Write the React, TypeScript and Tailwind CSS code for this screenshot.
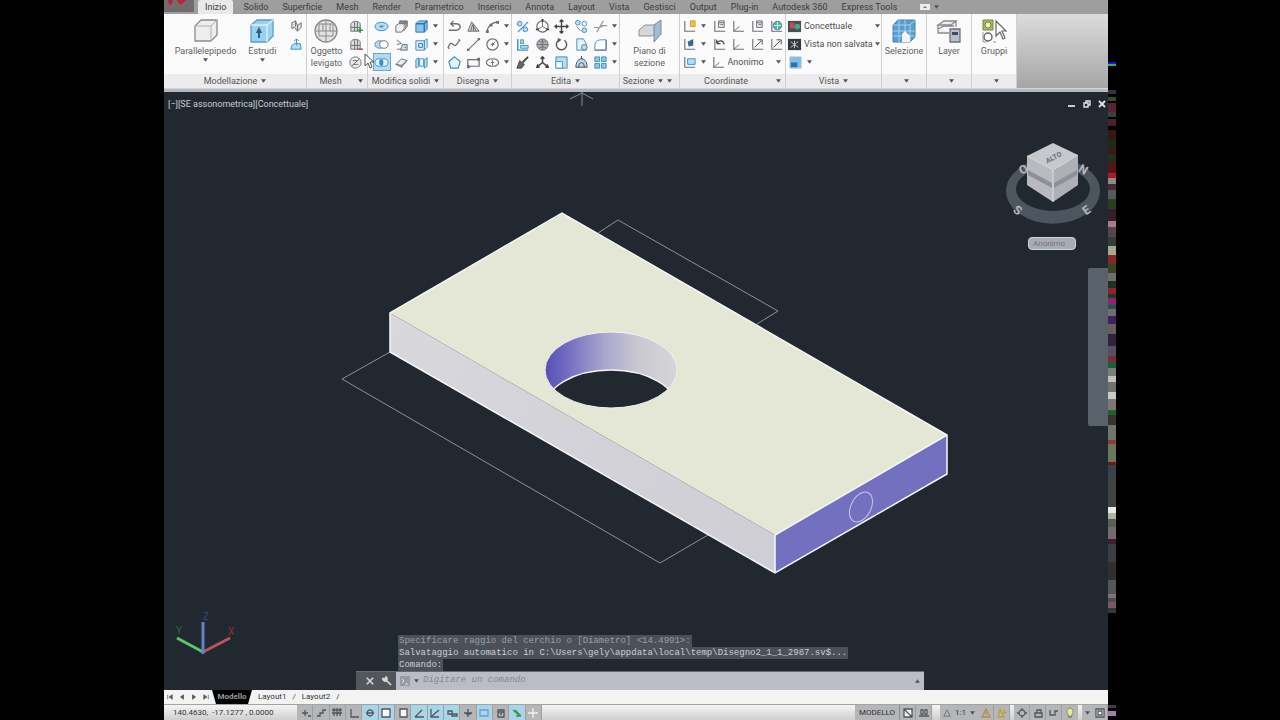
import React from 'react';
import clsx from 'clsx';

const menuTabs = [
    "Inizio", "Solido", "Superficie", "Mesh", "Render", "Parametrico", "Inserisci", "Annota",
    "Layout", "Vista", "Gestisci", "Output", "Plug-in", "Autodesk 360", "Express Tools",
];

const D = '#6b6f75';
const B = '#3f8fc6';
const L = '#b9dcf2';

// Small 16x16 drawings used in the ribbon
const glyphs: Record<string, React.ReactNode> = {
    polysolid: <><path d="M3 4l4-2 2 5 4-3v5l-4 4-3-4-3 1z" fill="#dcdcdc" stroke={D} /><path d="M7 2v6M9 7v6" stroke={D} /></>,
    presspull: <><path d="M3 9l3-2h6l1 6H2z" fill={L} stroke={B} /><path d="M8 9V2M5.5 4.500L8 2l2.500 2.500" stroke={B} /></>,
    meshMore: <><path d="M3 6c0-4 8-5 10-1v8H3zM3 9h10M7 3v10M10 3v10" fill="#dedede" stroke={D} /><path d="M13 9v6M10 12h6" stroke="#2e9a4a" strokeWidth="1.500" /></>,
    meshLess: <><path d="M3 6c0-4 8-5 10-1v8H3zM3 9h10M7 3v10M10 3v10" fill="#dedede" stroke={D} /><path d="M11 13h5" stroke="#b04040" strokeWidth="1.500" /></>,
    noMesh: <><circle cx="8" cy="8" r="6" fill="#ececec" stroke={D} /><path d="M4 12l8-8M5 6h6M5 10h6" stroke={D} /></>,
    union: <><ellipse cx="8" cy="8" rx="7" ry="4.500" fill={L} stroke={B} /><path d="M6 8h4" stroke={B} strokeWidth="2" /></>,
    subtract: <><ellipse cx="6" cy="8" rx="5" ry="4" fill={L} stroke={B} /><ellipse cx="10.500" cy="8" rx="4.500" ry="4" fill="#fff" stroke={D} /></>,
    intersect: <><ellipse cx="5.500" cy="8" rx="4.500" ry="4" fill="#e3f2fb" stroke={B} /><ellipse cx="10.500" cy="8" rx="4.500" ry="4" fill="#e3f2fb" stroke={B} /><ellipse cx="8" cy="8" rx="2" ry="3.500" fill={B} /></>,
    slice: <><path d="M6 2h8v5h-3V6H6z" fill="#888" stroke={D} /><path d="M2 7l3-2h6v5l-3 4H2z" fill="#f2f2f2" stroke={D} /><path d="M11 6l3-3v5l-4 5" fill="#aaa" stroke={D} /></>,
    interfere: <><path d="M3 3l5 4-5 1M3 13h6V8" stroke={D} /><path d="M9 8h5v6H7z" fill="#d9d9d9" stroke={D} /><path d="M11 11h2" stroke={B} /></>,
    thicken: <><path d="M2 10l6-6 6 2-6 7z" fill="#eee" stroke={D} /><path d="M2 10l6 1 6-5M8 11v2" stroke={D} /></>,
    cube: <><path d="M2 5l3-3h9v9l-3 3H2z" fill="#8ec5ea" stroke="#2676b5" /><path d="M2 5h9v9M11 5l3-3" stroke="#2676b5" strokeWidth="1.600" /></>,
    shell: <><path d="M2 4h9l3-2v9l-3 3H2z" fill="#d8ebf7" stroke={B} /><path d="M5 7h4v4H5zM11 4v10" stroke="#2676b5" /></>,
    separate: <><path d="M2 5l3-2v9l-3 2zM11 5l3-2v9l-3 2z" fill={L} stroke={B} /><path d="M6 4h4v8H6z" stroke={B} /></>,
    polyline: <path d="M2 12h8a4 3.500 0 0 0 0-7H4M7 2L4 5l3 3" stroke={D} strokeWidth="1.500" />,
    hatch: <><path d="M2 13L6 3l8 10z" fill="#cfcfcf" stroke={D} /><path d="M5 13l2-7M8 13l0-7M11 13L7 6" stroke={D} /></>,
    arc: <><path d="M2 14C3 7 7 4 13 3" stroke={D} strokeWidth="1.400" /><path d="M1 12h3v3H1zM12 2h3v3h-3zM5 5h3v3H5z" fill={D} /></>,
    spline: <path d="M1 12c3-9 5-4 7-3s3-3 6-6M1 12h2M12 3h2" stroke={D} strokeWidth="1.300" />,
    line: <><path d="M2 14L14 2" stroke={D} strokeWidth="1.200" /><path d="M1 12.500h2.500V15H1zM12.500 1H15v2.500h-2.500z" fill={D} /></>,
    circle: <><circle cx="8" cy="8" r="6" stroke={D} strokeWidth="1.300" /><path d="M8 8l3-3M6 8h4M8 6v4" stroke={D} /></>,
    polygon: <path d="M8 2l6 5-2 7H4L2 7z" fill="#e6f3fb" stroke={B} strokeWidth="1.300" />,
    rect: <><path d="M2 5h12v7H2z" stroke={D} strokeWidth="1.300" /><path d="M1 11h3v3H1zM12 3h3v3h-3z" fill={D} /></>,
    ellipse: <><ellipse cx="8" cy="8" rx="6.500" ry="4" stroke={D} strokeWidth="1.300" /><path d="M6 8h4M8 5v6" stroke={D} /></>,
    erase: <><path d="M3 14L14 3M2 6l4-3M9 13l5-2" stroke={B} strokeWidth="1.300" /><circle cx="5" cy="5" r="2.500" fill={L} stroke={B} /><circle cx="11" cy="11" r="2.500" fill={L} stroke={B} /></>,
    gizmo: <><circle cx="8" cy="8" r="6" stroke={D} strokeWidth="1.300" /><path d="M8 2v6l5 3M8 8l-5 3" stroke={D} /><path d="M7 0h2v3H7zM1 10h3v2H1zM12 10h3v2h-3z" fill="#444" /></>,
    move: <path d="M8 1v14M1 8h14M6 3l2-2 2 2M6 13l2 2 2-2M3 6L1 8l2 2M13 6l2 2-2 2" stroke="#444" strokeWidth="1.500" />,
    align: <><path d="M3 2v12h11" stroke={B} strokeWidth="1.500" /><path d="M6 3h3v4H6zM6 9h8v3H6z" fill={L} stroke={B} /></>,
    sphere: <><circle cx="8" cy="8" r="6" fill="#b5aeb0" stroke={D} /><path d="M2 8h12M8 2v12M4 4c3 2 5 2 8 0M4 12c3-2 5-2 8 0" stroke={D} /></>,
    rotate: <><path d="M5 3.500a5.500 5.500 0 1 0 6 0" stroke="#555" strokeWidth="1.500" /><path d="M4 1l4 2-4 3z" fill="#555" /></>,
    brush: <><path d="M14 2L8 8" stroke="#444" strokeWidth="2" /><path d="M5 6l5 4-3 4H2z" fill="#666" stroke="#444" /></>,
    tripod: <path d="M8 2v6l6 5M8 8l-6 5M6 4l2-2 2 2M5 13l-3 0 1-3M11 13l3 0-1-3" stroke="#444" strokeWidth="1.600" />,
    scale: <><path d="M2 2h12v12H2z" fill={L} stroke={B} /><path d="M2 7h7v7H2z" fill="#fff" stroke={B} /></>,
    copy: <><circle cx="4" cy="4" r="2.500" fill={L} stroke={B} /><circle cx="11" cy="5" r="2.500" stroke={B} /><circle cx="11" cy="12" r="2.500" fill={L} stroke={B} /><path d="M3 8l4 5" stroke={D} /></>,
    trim: <path d="M1 9h5M9 7h6M4 14l7-12M8 9l3-2" stroke="#96999e" strokeWidth="1.200" />,
    stretch: <><path d="M3 2h7l3 5v7H3z" fill="#e6f3fb" stroke={B} /><circle cx="11" cy="11" r="3" fill={L} stroke={D} /></>,
    fillet: <><path d="M2 14V9c0-4 3-6 7-6h5v11z" fill="#fff" stroke={B} /><path d="M2 14h12V3" stroke={D} /></>,
    offset: <><path d="M2 13c0-4 2-9 6-9s6 5 6 9z" fill={L} stroke="#444" /><path d="M5 13c0-2 1-5 3-5s3 3 3 5M8 1v3" stroke="#444" /></>,
    array: <path d="M2 2h5v5H2zM9 2h5v5H9zM2 9h5v5H2zM9 9h5v5H9z" fill="#8ec5ea" stroke={B} />,
    ucs: <><path d="M3 2v11h11" stroke={D} strokeWidth="1.200" /><path d="M3 13l6-5" stroke={D} /></>,
    ucsStar: <><path d="M3 2v11h11" stroke={D} strokeWidth="1.200" /><path d="M9 2h5v6H9z" fill="#f1c04c" stroke="#d79b28" /></>,
    ucsPage: <><path d="M3 2v11h11" stroke={D} strokeWidth="1.200" /><path d="M7 2h6v7H7zM7 4h6M9 6h3" fill="#e9e9e9" stroke={D} /></>,
    ucsWorld: <><path d="M3 2v11h11" stroke={D} strokeWidth="1.200" /><circle cx="9" cy="7" r="4.500" fill="#5fb39b" stroke="#3f7f9d" /><path d="M5 7h8M9 3v8" stroke="#d9f0e8" /></>,
    ucsFace: <><path d="M3 2v11h11" stroke={D} strokeWidth="1.200" /><path d="M6 5l6-3v7l-5 1z" fill="#3a6694" /></>,
    ucsPrev: <><path d="M3 2v11h11" stroke={D} strokeWidth="1.200" /><path d="M5 7c2-4 7-4 8 1M5 7V3M5 7h4" stroke="#444" strokeWidth="1.300" /></>,
    ucsArrow: <><path d="M3 2v11h11" stroke={D} strokeWidth="1.200" /><path d="M5 11l7-7M8 3h5v5" stroke="#444" /></>,
    ucsView: <><path d="M3 2v11h11" stroke={D} strokeWidth="1.200" /><path d="M6 4h8v6H6z" fill={L} stroke={B} /></>,
    style: <><path d="M1 2h14v12H1z" fill="#494f58" /><path d="M3 4h5v6H3z" fill="#c44e57" /><circle cx="11" cy="8" r="3" fill="#4aa486" /></>,
    view: <><path d="M1 2h14v12H1z" fill="#34383d" /><path d="M4 5l8 6M12 5l-8 6M8 4v8" stroke="#cfd3d8" /></>,
    viewport: <><path d="M2 2h12v12H2z" fill="#83bce6" stroke="#b0c4d4" /><path d="M3 8h7v5H3z" fill="#2b72b4" /></>,
};

const Glyph = ({ name }: { name: string }) => (
    <svg viewBox="0 0 16 16" fill="none" className="size-[15px] shrink-0" aria-hidden="true">
        {glyphs[name]}
    </svg>
);

const Caret = () => (
    <svg viewBox="0 0 6 4" className="h-1 w-[5px] shrink-0" aria-hidden="true">
        <path d="M0 0h6L3 4z" fill="#555" />
    </svg>
);

const Tool = ({ name, arrow, active }: { name: string; arrow?: boolean; active?: boolean }) => (
    <button
        type="button"
        aria-label={name}
        className={clsx(
            "flex h-[18px] items-center gap-1 border",
            active ? "border-[#6aa9d6] bg-[#b5dbf3]" : "border-transparent",
        )}
    >
        <Glyph name={name} />
        {arrow && <Caret />}
    </button>
);

const BigTool = ({ label, arrow, children }: { label: string[]; arrow?: boolean; children: React.ReactNode }) => (
    <button type="button" className="flex flex-col items-center text-[9px] leading-3 text-[#5f5f5f]">
        <svg viewBox="0 0 28 28" fill="none" className="size-7" aria-hidden="true">{children}</svg>
        {label.map((l) => <span key={l} className="whitespace-nowrap">{l}</span>)}
        {arrow && <span className="mt-px"><Caret /></span>}
    </button>
);

type PanelProps = { title?: string; width: string; caret?: boolean; corner?: boolean; children: React.ReactNode };

const Panel = ({ title, width, caret, corner, children }: PanelProps) => (
    <section className={clsx("flex shrink-0 flex-col border-r border-[#cfcfd3] bg-[#fbfbfc]", width)}>
        <div className="flex flex-1 items-start justify-center pt-[3px]">{children}</div>
        <button
            type="button"
            aria-label={title ?? "Espandi"}
            className="flex h-[14px] items-center justify-center gap-1 bg-[#ececee] text-[9px] leading-3 text-[#555]"
        >
            <span className={clsx(corner && !caret && "flex-1")}>{title}</span>
            {(caret || !title) && <Caret />}
            {corner && <span className="pr-1"><Caret /></span>}
        </button>
    </section>
);

const Ribbon = () => (
    <div className="flex h-[75px] border-b border-[#d5d5da] bg-[#f4f4f5]">
        <Panel title="Modellazione" width="w-[143px]" caret>
            <div className="flex gap-3 pl-[10px]">
                <BigTool label={["Parallelepipedo"]} arrow>
                    <path d="M3 9l6-6h16v15l-6 6H3z" fill="#ededed" stroke="#8a8a8a" strokeWidth="1.300" strokeLinejoin="round" />
                    <path d="M3 9h16v15M19 9l6-6" stroke="#b0b0b0" />
                </BigTool>
                <BigTool label={["Estrudi"]} arrow>
                    <path d="M3 8l6-5h16v16l-6 6H3z" fill="#9bd0ee" stroke="#5b9cc5" strokeWidth="1.300" strokeLinejoin="round" />
                    <path d="M3 8h16v17M19 8l6-5" stroke="#d9effa" strokeWidth="1.500" />
                    <path d="M11 21v-7M9.500 15l1.500-3 1.500 3z" fill="#2c6088" stroke="#2c6088" strokeWidth="2" />
                </BigTool>
                <div>
                    <Tool name="polysolid" />
                    <Tool name="presspull" />
                </div>
            </div>
        </Panel>
        <Panel title="Mesh" width="w-[61px]" corner>
            <BigTool label={["Oggetto", "levigato"]}>
                <circle cx="14" cy="14" r="11" fill="#e2e2e2" stroke="#8a8a8a" strokeWidth="1.300" />
                <path d="M3 14h22M7 7h14v12H7zM14 3v22M11 7v7M18 7v7" stroke="#8a8a8a" />
            </BigTool>
            <div className="pl-1">
                <Tool name="meshMore" />
                <Tool name="meshLess" />
                <Tool name="noMesh" />
            </div>
        </Panel>
        <Panel title="Modifica solidi" width="w-[76px]" caret>
            <div className="grid grid-cols-[18px_18px_26px] gap-x-[2px]">
                <Tool name="union" /><Tool name="slice" /><Tool name="cube" arrow />
                <Tool name="subtract" /><Tool name="interfere" /><Tool name="shell" arrow />
                <Tool name="intersect" active /><Tool name="thicken" /><Tool name="separate" arrow />
            </div>
        </Panel>
        <Panel title="Disegna" width="w-[68px]" caret>
            <div className="grid grid-cols-[18px_18px_26px] gap-x-px">
                <Tool name="polyline" /><Tool name="hatch" /><Tool name="arc" arrow />
                <Tool name="spline" /><Tool name="line" /><Tool name="circle" arrow />
                <Tool name="polygon" /><Tool name="rect" /><Tool name="ellipse" arrow />
            </div>
        </Panel>
        <Panel title="Edita" width="w-[108px]" caret>
            <div className="grid grid-cols-[19px_18px_19px_18px_26px] gap-x-px">
                <Tool name="erase" /><Tool name="gizmo" /><Tool name="move" /><Tool name="copy" /><Tool name="trim" arrow />
                <Tool name="align" /><Tool name="sphere" /><Tool name="rotate" /><Tool name="stretch" /><Tool name="fillet" arrow />
                <Tool name="brush" /><Tool name="tripod" /><Tool name="scale" /><Tool name="offset" /><Tool name="array" arrow />
            </div>
        </Panel>
        <Panel title="Sezione" width="w-[60px]" caret corner>
            <BigTool label={["Piano di", "sezione"]}>
                <path d="M3 13l6-5h12v7l-5 4H3z" fill="#d4d7db" stroke="#8d9298" />
                <path d="M18 8l7-5v14l-7 8z" fill="#9fbdd6" stroke="#7c8994" />
            </BigTool>
        </Panel>
        <Panel title="Coordinate" width="w-[106px]" corner>
            <div className="flex gap-1">
                <div>
                    <Tool name="ucsStar" arrow />
                    <Tool name="ucsFace" arrow />
                    <Tool name="ucsView" arrow />
                </div>
                <div>
                    <div className="grid grid-cols-4 gap-x-[2px]">
                        <Tool name="ucsPage" /><Tool name="ucs" /><Tool name="ucsPage" /><Tool name="ucsWorld" />
                        <Tool name="ucsPrev" /><Tool name="ucs" /><Tool name="ucsArrow" /><Tool name="ucsArrow" />
                    </div>
                    <Picker icon="ucs" label="UCS" value="Anonimo" />
                </div>
            </div>
        </Panel>
        <Panel title="Vista" width="w-[96px]" caret>
            <div className="flex-1 pl-1">
                <Picker icon="style" label="Stile di visualizzazione" value="Concettuale" />
                <Picker icon="view" label="Vista" value="Vista non salvata" />
                <Tool name="viewport" arrow />
            </div>
        </Panel>
        <Panel width="w-[45px]">
            <BigTool label={["Selezione"]}>
                <path d="M3 8l5-5h17v17l-5 5H3z" fill="#5a9fd0" stroke="#4a7fa6" />
                <path d="M3 8h17v17M20 8l5-5M9 3v22M15 3v22M3 14h22M3 19h22" stroke="#a4cfea" />
                <path d="M12 25v-8l3-3 5 5v6z" fill="#f4f4f4" />
            </BigTool>
        </Panel>
        <Panel width="w-[45px]">
            <BigTool label={["Layer"]}>
                <path d="M3 8l6-4h12l-5 4zM3 12l6-3h10M3 8v8h11M21 4v6" fill="#eee" stroke="#8b8b8b" strokeWidth="1.300" />
                <path d="M15 12h10v13H15z" fill="#b9bdc9" stroke="#6e7280" strokeWidth="1.300" />
                <path d="M17 15h6v3h-6z" fill="#454a5a" />
            </BigTool>
        </Panel>
        <Panel width="w-[45px]">
            <BigTool label={["Gruppi"]}>
                <path d="M3 3h10v10H3z" fill="#a9bb55" stroke="#76833d" />
                <circle cx="8" cy="8" r="3" fill="#eef3cf" stroke="#76833d" />
                <circle cx="8" cy="20" r="4" stroke="#666" strokeWidth="1.500" />
                <path d="M16 4v15l4-4 3 7 2-1-3-7h4z" fill="#fff" stroke="#666" strokeWidth="1.200" />
                <path d="M3 15v10h4M13 25h3" stroke="#999" />
            </BigTool>
        </Panel>
        <div className="flex-1 bg-linear-to-b from-[#dcdcdc] to-[#a6a6a6]" />
    </div>
);

const Picker = ({ icon, label, value }: { icon: string; label: string; value: string }) => (
    <label className="flex h-[18px] items-center gap-[2px] pr-1">
        <Glyph name={icon} />
        <select
            aria-label={label}
            className="min-w-0 flex-1 appearance-none bg-transparent text-[9px] leading-3 text-[#4f4f4f] outline-none"
        >
            <option>{value}</option>
        </select>
        <Caret />
    </label>
);

const Model = () => (
    <svg viewBox="164 92 944 598" fill="none" className="absolute inset-0 size-full" role="img" aria-label="Modello 3D">
        <defs>
            <linearGradient id="bore" x1="545" x2="677" y1="0" y2="0" gradientUnits="userSpaceOnUse">
                <stop offset="0" stopColor="#5650b4" />
                <stop offset="0.150" stopColor="#6f69c0" />
                <stop offset="0.450" stopColor="#aaa6cd" />
                <stop offset="0.700" stopColor="#c9c8d2" />
                <stop offset="1" stopColor="#d6d6d8" />
            </linearGradient>
            <linearGradient id="side" x1="390" x2="775" y1="330" y2="550" gradientUnits="userSpaceOnUse">
                <stop offset="0" stopColor="#d8d7dc" />
                <stop offset="1" stopColor="#cfced6" />
            </linearGradient>
            <clipPath id="hole">
                <ellipse cx="611" cy="370" rx="66" ry="38" />
            </clipPath>
        </defs>
        <path d="M390 352L342 379L660 563L708 535M598 233L618 220L778 311L757 324" stroke="#8b9198" />
        <path d="M390 313L562 213L947 435L775 535z" fill="#e4e7d6" />
        <path d="M390 313L775 535V573L390 352z" fill="url(#side)" />
        <path d="M775 535L947 435V474L775 573z" fill="#7470c0" />
        <path d="M390 313L562 213L947 435V474L775 573L390 352zM775 573V535L947 435" stroke="#f7f7f7" strokeWidth="1.500" />
        <g clipPath="url(#hole)">
            <path d="M545 332h132v76H545z" fill="url(#bore)" />
            <ellipse cx="611" cy="408" rx="66" ry="38" fill="#212830" stroke="#f4f4f8" strokeWidth="1.500" />
        </g>
        <ellipse cx="611" cy="370" rx="66" ry="38" stroke="#f0f0f2" />
        <ellipse cx="861" cy="507" rx="10" ry="16" transform="rotate(27 861 507)" stroke="#c8c6ea" />
        {/* crosshair parked under the ribbon */}
        <path d="M582 92v14M582 93l-12 6M582 93l11 6" stroke="#878c93" />
        {/* UCS tripod */}
        <g strokeWidth="3">
            <path d="M203 652L177 638" stroke="#5fc46c" />
            <path d="M203 652L230 638" stroke="#b5565c" />
            <path d="M203 654V622" stroke="#6680c4" />
        </g>
        <g fontSize="10">
            <text x="203" y="620" fill="#2f4a8f">Z</text>
            <text x="228" y="635" fill="#8c3038">X</text>
            <text x="176" y="634" fill="#2c6b3a">Y</text>
        </g>
    </svg>
);

const ViewCube = () => (
    <div className="absolute right-2 top-[45px] flex flex-col items-center gap-2">
        <svg viewBox="0 0 96 92" fill="none" className="h-[92px] w-24" role="img" aria-label="ViewCube">
            <path fillRule="evenodd" d="M2 54a46 32 0 1 0 94 0a46 32 0 1 0-94 0zM12 52a37 22 0 1 1 74 0a37 22 0 1 1-74 0z" fill="#4d565e" />
            <path d="M49 6L74 18L49 33L23 19z" fill="#c7c8cc" />
            <path d="M23 19L49 33V65L23 48z" fill="#b9babf" />
            <path d="M74 18L49 33V65L74 48z" fill="#afb0b6" />
            <path d="M23 19L49 33L74 18M49 33V65" stroke="#dcdde0" />
            <path d="M24 33L48 46V51L24 38zM50 46L73 33V38L50 51z" fill="#8e9096" />
            <g fontSize="7" fontWeight="bold" fill="#6b6d73">
                <text x="41" y="23" transform="rotate(-28 49 20)">ALTO</text>
            </g>
            <g fontSize="12" fontWeight="bold" fill="#b4b8bd">
                <text x="15" y="36" transform="rotate(-30 20 32)">O</text>
                <text x="75" y="36" transform="rotate(30 78 32)">N</text>
                <text x="10" y="77" transform="rotate(35 13 73)">S</text>
                <text x="79" y="77" transform="rotate(-35 83 73)">E</text>
            </g>
        </svg>
        <button type="button" className="h-[13px] w-12 rounded-sm border border-[#d0d2d8] bg-[#a9acb6] px-1 text-left text-[8px] leading-[10px] text-[#70737d]">
            Anonimo
        </button>
    </div>
);

const history = [
    "Specificare raggio del cerchio o [Diametro] <14.4991>:",
    "Salvataggio automatico in C:\\Users\\gely\\appdata\\local\\temp\\Disegno2_1_1_2987.sv$...",
    "Comando:",
];

const CommandLine = () => (
    <div className="absolute bottom-0 left-[192px] right-[184px] font-['Liberation_Mono',monospace] text-[9px]">
        <div className="flex flex-col items-start pl-[42px]">
            {history.map((line, i) => (
                <p key={line} className={clsx("bg-[#4b5159] px-px leading-3", i === 0 ? "text-[#9a9ea4]" : "text-[#cbced2]")}>{line}</p>
            ))}
        </div>
        <div className="flex h-[19px] items-stretch border-t border-[#666a72] bg-[#babdc6]">
            <div className="flex w-10 items-center justify-end gap-2 bg-[#53565a] pr-1">
                <button type="button" aria-label="Chiudi">
                    <svg viewBox="0 0 10 10" className="size-2"><path d="M1 1l8 8M9 1l-8 8" stroke="#d8d8d8" strokeWidth="2" /></svg>
                </button>
                <button type="button" aria-label="Personalizza">
                    <svg viewBox="0 0 10 10" className="size-[10px]"><path d="M4 4l5 5M1 2l2 2 1-3a2.500 2.500 0 0 1 0 4 2.500 2.500 0 0 1-3-3" fill="none" stroke="#d8d8d8" strokeWidth="1.700" /></svg>
                </button>
            </div>
            <span className="flex items-center gap-1 px-1">
                <svg viewBox="0 0 10 10" className="size-[10px]"><path d="M0 0h10v10H0z" fill="#989ba3" /><path d="M2 3l2 2-2 2M5 8h3" fill="none" stroke="#dfe1e6" /></svg>
                <Caret />
            </span>
            <input
                aria-label="Riga di comando"
                placeholder="Digitare un comando"
                className="min-w-0 flex-1 bg-transparent italic text-[#555] outline-none placeholder:text-[#85888f]"
            />
            <button type="button" aria-label="Cronologia comandi" className="rotate-180 px-1"><Caret /></button>
        </div>
    </div>
);

const Viewport = () => (
    <main className="relative flex-1 overflow-hidden bg-[#212830]">
        <Model />
        <div className="relative flex items-start justify-between pl-1 pt-[6px] text-[9px] leading-3 text-[#c9ccd0]">
            <button type="button">[−][SE assonometrica][Concettuale]</button>
            <div className="flex gap-[7px] pr-[2px] pt-[2px]">
                <button type="button" aria-label="Riduci a icona"><svg viewBox="0 0 8 8" className="size-2"><path d="M0 5h7v2H0z" fill="#c9ccd0" /></svg></button>
                <button type="button" aria-label="Ripristina"><svg viewBox="0 0 8 8" className="size-2"><path d="M1 3h4v4H1zM3 3V1h4v4H5" fill="none" stroke="#e2e4e8" strokeWidth="1.400" /></svg></button>
                <button type="button" aria-label="Chiudi disegno"><svg viewBox="0 0 8 8" className="size-2"><path d="M1 1l6 6M7 1L1 7" stroke="#e2e4e8" strokeWidth="1.800" /></svg></button>
            </div>
        </div>
        <ViewCube />
        <div className="absolute right-0 top-[176px] h-[158px] w-5 rounded-l-xs bg-[#59626a]" />
        <CommandLine />
    </main>
);

const LayoutTabs = () => (
    <nav className="flex h-[14px] items-center bg-[#f3f3f4] text-[8px] leading-3 text-[#333]">
        <div className="flex w-12 justify-around">
            {["M1 1v6M7 1L3 4l4 3z", "M6 1L2 4l4 3z", "M2 1l4 3-4 3z", "M7 1v6M1 1l4 3-4 3z"].map((d) => (
                <button type="button" key={d} aria-label="Scorri layout">
                    <svg viewBox="0 0 8 8" className="size-[6px]"><path d={d} fill="#555" stroke="#555" /></svg>
                </button>
            ))}
        </div>
        <a href="#modello" className="flex h-full w-10 items-center justify-center bg-black font-bold text-[#9a9a9a] [clip-path:polygon(0_0,100%_0,90%_100%,10%_100%)]">Modello</a>
        <a href="#layout1" className="pl-[6px]">Layout1</a>
        <span className="px-[6px]">/</span>
        <a href="#layout2">Layout2</a>
        <span className="px-[6px]">/</span>
    </nav>
);

const toggles = [
    { label: "Deduci vincoli", on: false, d: "M3 6h6M6 3v6M9 9h3" },
    { label: "Snap", on: false, d: "M2 9h3v-3h3V3h3" },
    { label: "Griglia", on: false, d: "M1 3h10M1 6h10M3 1v8M6 1v8M9 1v8" },
    { label: "Orto", on: false, d: "M3 2v8h8" },
    { label: "Polare", on: true, d: "M2 6h8M6 3a3 3 0 1 0 .1 0M5 6h3" },
    { label: "Osnap", on: true, d: "M2 2h8v8H2z", paper: true },
    { label: "Osnap 3D", on: false, d: "M3 2h7v8H3z", paper: true },
    { label: "Puntamento", on: true, d: "M2 10h9M2 10l7-7" },
    { label: "UCS dinamico", on: true, d: "M2 2v8h8M3 9l7-6" },
    { label: "Input dinamico", on: true, d: "M2 4h4v3H2zM6 7h5v2H6z" },
    { label: "Spessore linea", on: false, d: "M2 6h8M6 2v8M4 7h5" },
    { label: "Trasparenza", on: true, d: "M2 3h8v6H2z", stroke: "#6a9fd0" },
    { label: "Proprietà rapide", on: false, d: "M3 3h6v7H3zM3 5h6M5 7h2" },
    { label: "Ciclo selezione", on: true, d: "M2 3l7 6M4 3l6 6M5 9h5", stroke: "#3f8f5a" },
    { label: "Monitor annotazioni", on: false, d: "M6 1v10M1 6h10", stroke: "#f0f0f0" },
];

type StatusProps = { label: string; d: string; on?: boolean; paper?: boolean; stroke?: string };

const StatusButton = ({ label, d, on, paper, stroke = "#50565c" }: StatusProps) => (
    <button
        type="button"
        aria-label={label}
        aria-pressed={on}
        className={clsx("flex h-full min-w-4 items-center justify-center border-r border-[#9d9fa2]", on ? "bg-[#a8d5e8]" : "bg-[#b5b6b8]")}
    >
        <svg viewBox="0 0 12 12" className="size-3" fill={paper ? "#f6f6f4" : "none"}><path d={d} stroke={stroke} strokeWidth="1.300" /></svg>
    </button>
);

const StatusBar = () => (
    <footer className="flex h-4 items-stretch border-t border-[#a3a3a5] bg-linear-to-b from-[#f4f4f4] to-[#cfcfcf] text-[8px] leading-3 text-[#333]">
        <span className="flex w-[133px] items-center whitespace-pre pl-[9px]">140.4630,  -17.1277 , 0.0000</span>
        <div className="grid w-[245px] grid-cols-15">
            {toggles.map((t) => <StatusButton key={t.label} {...t} />)}
        </div>
        <div className="flex-1" />
        <button type="button" className="w-[45px] border-r border-[#8d8f92] bg-[#b5b6b8]">MODELLO</button>
        <StatusButton label="Layout rapido" d="M2 2h8v8H2zM2 2l8 8" paper />
        <StatusButton label="Disegni rapidi" d="M1 9h10M3 3h2v4H3zM7 3h2v4H7z" paper />
        <button type="button" className="ml-2 flex w-[38px] items-center justify-center gap-1 bg-[#b5b6b8]">
            <svg viewBox="0 0 10 10" className="size-2"><path d="M5 1l4 8H1z" fill="none" stroke="#666" /></svg>
            1:1
            <Caret />
        </button>
        <StatusButton label="Visibilità annotazione" d="M6 2l4 8H2zM6 5v3" stroke="#b98c4e" />
        <StatusButton label="Scala automatica" d="M4 2l4 8H2zM8 2v4l3-1" stroke="#c0a03a" />
        <div className="w-1" />
        <StatusButton label="Area di lavoro" d="M6 3a3 3 0 1 0 .1 0M6 1v2M6 9v2M1 6h2M9 6h2" />
        <StatusButton label="Blocca" d="M3 6h7v4H3zM5 6V3h4v3" />
        <StatusButton label="Accelerazione hardware" d="M2 3v5h4M7 9V4h3" />
        <button type="button" aria-label="Isola oggetti" className="flex w-4 items-center justify-center bg-[#b5b6b8]">
            <svg viewBox="0 0 12 12" className="size-3"><path d="M6 1a3.500 3.500 0 0 1 2 6v2H4V7a3.500 3.500 0 0 1 2-6z" fill="#e9eb9a" stroke="#8f9150" /><path d="M4 10h4" stroke="#666" /></svg>
        </button>
        <button type="button" aria-label="Menu barra di stato" className="ml-1 flex w-[10px] items-center justify-center bg-[#b5b6b8]"><Caret /></button>
        <StatusButton label="Schermo pulito" d="M2 2h8v8H2zM4 4h4v4H4z" paper />
    </footer>
);

// [top, height, colour] of each band of the desktop edge
const bands: [number, number, string][] = [
    [62, 2, "#1414e0"], [64, 2, "#3fae4a"], [90, 4, "#37323a"], [97, 4, "#37482f"], [103, 9, "#5a2335"],
    [112, 5, "#3d3f3c"], [119, 7, "#482226"], [130, 8, "#3a1518"], [138, 10, "#202818"], [148, 6, "#3d171b"],
    [154, 9, "#262e1c"], [163, 10, "#571318"], [173, 5, "#a81c28"], [178, 6, "#8d8a8a"], [184, 6, "#462a38"],
    [190, 9, "#56585c"], [199, 10, "#29401f"], [209, 12, "#3b1c2a"], [221, 6, "#a27f88"], [227, 10, "#5a4250"],
    [237, 9, "#353c34"], [246, 9, "#a8a890"], [255, 8, "#8c2430"], [263, 10, "#38471f"], [273, 8, "#6c6f6b"],
    [281, 7, "#1b3320"], [288, 6, "#91212b"], [294, 4, "#1e3b1d"], [298, 7, "#8c2476"], [305, 4, "#165b43"],
    [309, 7, "#716c75"], [316, 8, "#422060"], [324, 10, "#685e5f"], [334, 12, "#34223c"], [346, 10, "#555063"],
    [356, 6, "#7d2932"], [362, 6, "#136040"], [368, 8, "#7a7f7a"], [376, 6, "#c0c0bd"], [382, 10, "#73706d"],
    [392, 7, "#c8cbc8"], [399, 11, "#7e7773"], [410, 5, "#1f632c"], [415, 10, "#38332d"], [425, 15, "#6f756b"],
    [440, 4, "#8a3c3c"], [444, 18, "#6b7560"], [462, 3, "#6e1717"], [465, 12, "#37424a"], [477, 30, "#40433f"],
    [507, 6, "#e8e8e0"], [513, 6, "#b0b2a4"], [519, 8, "#5a5f58"], [527, 12, "#756a6c"], [539, 5, "#3c1f30"],
    [544, 18, "#3c3c44"], [562, 18, "#332e2c"], [580, 14, "#53575a"], [594, 4, "#8c6a7a"], [598, 4, "#4a4f52"],
    [602, 6, "#7c5a64"], [608, 5, "#34373a"], [705, 3, "#47384a"], [711, 5, "#a27fae"],
];

const DesktopEdge = () => (
    <svg viewBox="0 0 8 720" preserveAspectRatio="none" className="h-full w-2 shrink-0" shapeRendering="crispEdges" aria-hidden="true">
        {bands.map(([y, h, fill]) => <rect key={y} y={y} width="8" height={h} fill={fill} />)}
    </svg>
);

const App: React.FC = () => (
    <div className="flex h-screen bg-black px-[164px] font-['Roboto','Open_Sans',sans-serif]">
        <div className="relative flex min-w-0 flex-1 flex-col">
            <header className="flex h-[14px] items-start bg-[#9e9e9e]">
                <button type="button" aria-label="Menu applicazione" className="h-3 w-[30px] bg-[#746b6d]">
                    <svg viewBox="0 0 30 12" className="h-3 w-[30px]"><path d="M4 0h5l-1 4-3 1zM13 0h9l-4 4h-3z" fill="#b8243a" /></svg>
                </button>
                <nav className="flex flex-1 pl-1 text-[9px] leading-[14px] text-[#3c3c3c]">
                    {menuTabs.map((t, i) => (
                        <button
                            type="button"
                            key={t}
                            className={clsx("whitespace-nowrap px-[7px]", i === 0 && "mr-[3px] rounded-t-xs bg-[#e9e9ea]")}
                        >
                            {t}
                        </button>
                    ))}
                    <button type="button" aria-label="Riduci barra" className="flex h-[14px] items-center gap-1 px-4">
                        <svg viewBox="0 0 10 8" className="h-2 w-[10px]"><path d="M0 1h10v6H0z" fill="#ececec" /><path d="M3 5l2-2 2 2z" fill="#777" /></svg>
                        <Caret />
                    </button>
                </nav>
            </header>
            <Ribbon />
            <div className="h-[3px] bg-[#b9b7bf]" />
            <Viewport />
            <LayoutTabs />
            <StatusBar />
            <svg viewBox="0 0 10 16" className="pointer-events-none absolute left-[200px] top-[53px] h-4 w-[10px]" aria-hidden="true">
                <path d="M1 1v12l3-3 2 5 2-1-2-5h4z" fill="#fff" stroke="#555" />
            </svg>
        </div>
        <DesktopEdge />
    </div>
);

export default App;
